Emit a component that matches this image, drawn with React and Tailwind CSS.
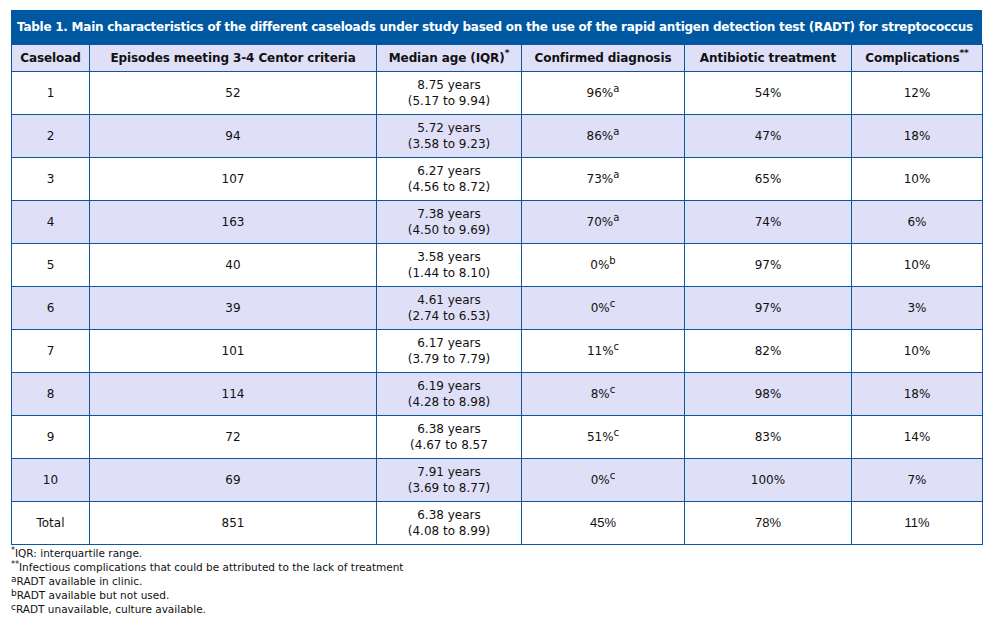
const rows = [
  ["1", "52", "8.75 years", "(5.17 to 9.94)", "96%", "a", "54%", "12%"],
  ["2", "94", "5.72 years", "(3.58 to 9.23)", "86%", "a", "47%", "18%"],
  ["3", "107", "6.27 years", "(4.56 to 8.72)", "73%", "a", "65%", "10%"],
  ["4", "163", "7.38 years", "(4.50 to 9.69)", "70%", "a", "74%", "6%"],
  ["5", "40", "3.58 years", "(1.44 to 8.10)", "0%", "b", "97%", "10%"],
  ["6", "39", "4.61 years", "(2.74 to 6.53)", "0%", "c", "97%", "3%"],
  ["7", "101", "6.17 years", "(3.79 to 7.79)", "11%", "c", "82%", "10%"],
  ["8", "114", "6.19 years", "(4.28 to 8.98)", "8%", "c", "98%", "18%"],
  ["9", "72", "6.38 years", "(4.67 to 8.57", "51%", "c", "83%", "14%"],
  ["10", "69", "7.91 years", "(3.69 to 8.77)", "0%", "c", "100%", "7%"],
];

const cell = "border border-[#0a58a0] text-center align-middle p-0";

export default function App() {
  return (
    <div className="bg-white w-[992px] h-[629px] pt-[10px] pl-[11px] text-[#111] font-['DejaVu_Sans',sans-serif]">
      <div className="w-[971px]">
        <div className="bg-[#0058a2] h-[34px] flex items-center pl-[6px] text-white font-bold text-[12px] tracking-[-0.25px] whitespace-nowrap">
          Table 1. Main characteristics of the different caseloads under study based on the use of the rapid antigen detection test (RADT) for streptococcus
        </div>
        <table className="w-[971px] table-fixed border-collapse text-[12px] leading-[16px]">
          <colgroup>
            <col className="w-[78px]" />
            <col className="w-[287px]" />
            <col className="w-[145px]" />
            <col className="w-[163px]" />
            <col className="w-[167px]" />
            <col className="w-[131px]" />
          </colgroup>
          <thead>
            <tr className="bg-[#dfdff7] h-[27px] font-bold tracking-[-0.1px]">
              <th className={cell}>Caseload</th>
              <th className={cell}>Episodes meeting 3-4 Centor criteria</th>
              <th className={cell}>
                Median age (IQR)<sup className="text-[9px] -top-[6px]">*</sup>
              </th>
              <th className={cell}>Confirmed diagnosis</th>
              <th className={cell}>Antibiotic treatment</th>
              <th className={cell}>
                Complications<sup className="text-[9px] -top-[6px]">**</sup>
              </th>
            </tr>
          </thead>
          <tbody>
            {rows.map((r, i) => (
              <tr key={r[0]} className={`h-[43px] ${i % 2 === 1 ? "bg-[#dfdff7]" : "bg-white"}`}>
                <td className={cell}>{r[0]}</td>
                <td className={cell}>{r[1]}</td>
                <td className={cell}>
                  <div>{r[2]}</div>
                  <div>{r[3]}</div>
                </td>
                <td className={cell}>
                  {r[4]}
                  <sup className="text-[10px]">{r[5]}</sup>
                </td>
                <td className={cell}>{r[6]}</td>
                <td className={cell}>{r[7]}</td>
              </tr>
            ))}
            <tr className="h-[43px] bg-white">
              <td className={cell}>Total</td>
              <td className={cell}>851</td>
              <td className={cell}>
                <div>6.38 years</div>
                <div>(4.08 to 8.99)</div>
              </td>
              <td className={`${cell} font-['Liberation_Sans',sans-serif] text-[13px]`}>45%</td>
              <td className={`${cell} font-['Liberation_Sans',sans-serif] text-[13px]`}>78%</td>
              <td className={`${cell} font-['Liberation_Sans',sans-serif] text-[13px]`}>11%</td>
            </tr>
          </tbody>
        </table>
        <div className="text-[10.5px] leading-[14px] mt-[1px]">
          <div>
            <sup className="text-[8px]">*</sup>IQR: interquartile range.
          </div>
          <div>
            <sup className="text-[8px]">**</sup>Infectious complications that could be attributed to the lack of treatment
          </div>
          <div>
            <sup className="text-[9px] -top-[3px]">a</sup>RADT available in clinic.
          </div>
          <div>
            <sup className="text-[9px] -top-[3px]">b</sup>RADT available but not used.
          </div>
          <div>
            <sup className="text-[9px] -top-[3px]">c</sup>RADT unavailable, culture available.
          </div>
        </div>
      </div>
    </div>
  );
}
